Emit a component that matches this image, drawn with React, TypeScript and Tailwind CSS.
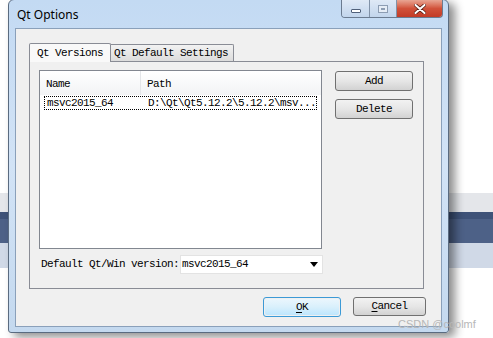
import React from "react";

const mono = { fontFamily: '"Liberation Mono", "DejaVu Sans Mono", monospace' };

function WinButton({ label, className = "" }: { label: React.ReactNode; className?: string }) {
  return (
    <div
      className={
        "flex items-center justify-center rounded-[3px] border border-[#707070] bg-gradient-to-b from-[#f2f2f2] via-[#e6e6e6] to-[#d2d2d2] text-[11px] tracking-[-0.6px] text-black " +
        className
      }
      style={mono}
    >
      {label}
    </div>
  );
}

export default function App() {
  return (
    <div className="relative w-[493px] h-[338px] overflow-hidden bg-white">
      {/* desktop behind the dialog */}
      <div className="flex flex-col pt-[193px]">
        <div className="h-[19px] bg-[#e4e6ea]" />
        <div className="h-[7px] bg-[#3e5278]" />
        <div className="h-[24px] bg-[#4d6187]" />
        <div className="h-[25px] bg-[#d0d9e7]" />
      </div>

      {/* dialog window */}
      <div className="absolute left-[8px] top-[-1px] w-[441px] h-[334px] rounded-t-[6px] rounded-b-[3px] border border-[#5a6b80] bg-gradient-to-b from-[#c3daf3] via-[#d2e3f6] to-[#c4d9ef] shadow-[6px_4px_10px_rgba(0,0,0,0.45)] flex flex-col">
        {/* title bar */}
        <div className="relative h-[28px] shrink-0">
          <span
            className="absolute left-[8px] top-[6px] text-[12px] text-black"
            style={{ fontFamily: '"Noto Sans", "Open Sans", sans-serif' }}
          >
            Qt Options
          </span>
          <div className="absolute right-[5px] top-0 flex h-[18px] rounded-b-[4px] border border-t-0 border-[#6b7b90] overflow-hidden">
            <div className="w-[28px] flex items-center justify-center bg-gradient-to-b from-[#dfe9f6] to-[#c2d5ec] border-r border-[#8192a8]">
              <div className="w-[10px] h-[4px] mt-[4px] rounded-[1px] border border-[#50607a] bg-white" />
            </div>
            <div className="w-[27px] flex items-center justify-center bg-gradient-to-b from-[#dfe9f6] to-[#c2d5ec] border-r border-[#8192a8]">
              <div className="w-[10px] h-[8px] border border-[#8d9db3] bg-[#e6edf6] flex items-center justify-center">
                <div className="w-[4px] h-[2px] border border-[#8d9db3]" />
              </div>
            </div>
            <div className="w-[45px] flex items-center justify-center bg-gradient-to-b from-[#e8a593] via-[#d1513a] to-[#c23b26]">
              <svg width="12" height="10" viewBox="0 0 12 10">
                <path d="M1.5 1 L10.5 9 M10.5 1 L1.5 9" stroke="#5a2016" strokeWidth="3.6" strokeLinecap="round" />
                <path d="M1.5 1 L10.5 9 M10.5 1 L1.5 9" stroke="#ffffff" strokeWidth="2" strokeLinecap="round" />
              </svg>
            </div>
          </div>
        </div>

        {/* client area */}
        <div className="mx-[6px] mb-[5px] flex-1 border border-[#8aa0ba] bg-[#f0f0f0] flex flex-col pl-[13px] pr-[17px] pt-[13px]">
          {/* tabs */}
          <div className="flex items-end h-[19px]" style={mono}>
            <div className="relative z-10 h-[19px] w-[82px] -mb-px border border-b-0 border-[#898c95] bg-[#f9f9f9] pl-[7px] pt-[1px] text-[11px] tracking-[-0.6px] text-black rounded-t-[2px]">
              Qt Versions
            </div>
            <div className="h-[17px] w-[123px] border border-l-0 border-b-0 border-[#898c95] bg-gradient-to-b from-[#f2f2f2] to-[#dcdcdc] pl-[3px] text-[11px] tracking-[-0.6px] text-black rounded-tr-[2px]">
              Qt Default Settings
            </div>
          </div>

          {/* tab pane */}
          <div className="h-[228px] border border-[#898c95] bg-[#f0f0f0] flex flex-col pl-[9px] pr-[11px] pt-[8px]" style={mono}>
            <div className="flex gap-[13px]">
              {/* table */}
              <div className="w-[284px] h-[179px] border border-[#828790] bg-white flex flex-col">
                <div className="flex h-[24px] bg-gradient-to-b from-white to-[#f2f3f5] text-[11px] tracking-[-0.6px] text-black">
                  <div className="w-[101px] border-r border-[#e3e5e8] pl-[6px] pt-[5px]">Name</div>
                  <div className="pl-[6px] pt-[5px]">Path</div>
                </div>
                <div className="mx-[4px] mt-[1px] h-[14px] flex border border-dotted border-black text-[11px] tracking-[-0.6px] text-black leading-[12px]">
                  <div className="w-[100px] pl-[2px]">msvc2015_64</div>
                  <div className="pl-[3px]">D:\Qt\Qt5.12.2\5.12.2\msv...</div>
                </div>
              </div>
              {/* side buttons */}
              <div className="flex flex-col gap-[8px] pt-[1px]">
                <WinButton label="Add" className="w-[78px] h-[20px]" />
                <WinButton label="Delete" className="w-[78px] h-[20px]" />
              </div>
            </div>

            <div className="flex items-center mt-[6px] h-[19px]">
              <span className="pl-[2px] w-[141px] text-[11px] tracking-[-0.6px] text-black">Default Qt/Win version:</span>
              <div className="w-[143px] h-[19px] border border-[#e3e3e3] bg-white flex items-center justify-between pl-[1px] pr-[4px] text-[11px] tracking-[-0.6px] text-black">
                <span>msvc2015_64</span>
                <svg width="8" height="5" viewBox="0 0 8 5">
                  <path d="M0 0 H8 L4 5 Z" fill="#000" />
                </svg>
              </div>
            </div>
          </div>

          {/* dialog buttons */}
          <div className="flex justify-end gap-[12px] mt-[8px] -mr-[2px]">
            <div className="w-[78px] h-[20px] rounded-[3px] border border-[#3c9ad6] p-px">
              <div
                className="w-full h-full flex items-center justify-center rounded-[2px] bg-gradient-to-b from-[#eaf6fd] via-[#d9f0fc] to-[#bee6fd] text-[11px] tracking-[-0.6px] text-black"
                style={mono}
              >
                <span className="underline underline-offset-2">O</span>K
              </div>
            </div>
            <WinButton
              label={
                <>
                  <span className="underline underline-offset-2">C</span>ancel
                </>
              }
              className="w-[73px] h-[19px]"
            />
          </div>
        </div>
      </div>

      {/* watermark */}
      <span
        className="absolute left-[398px] top-[316px] text-[11px] text-[#b7b7b7]"
        style={{ fontFamily: '"Liberation Sans", Arial, sans-serif' }}
      >
        CSDN @coolmf
      </span>
    </div>
  );
}
